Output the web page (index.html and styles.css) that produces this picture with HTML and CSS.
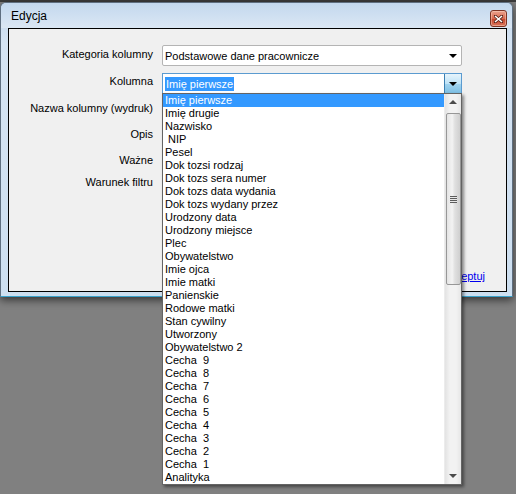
FILE: index.html
```html
<!DOCTYPE html>
<html lang="pl">
<head>
<meta charset="utf-8">
<title>Edycja</title>
<link rel="stylesheet" href="styles.css">
</head>
<body>
<div class="window">
  <div class="titlebar">
    <span class="title">Edycja</span>
    <span class="close"><svg width="9" height="8" viewBox="0 0 9 8"><path d="M1 1 L8 7 M8 1 L1 7" stroke="#5a2318" stroke-width="3" stroke-linecap="square"/><path d="M1 1 L8 7 M8 1 L1 7" stroke="#fff" stroke-width="1.6"/></svg></span>
  </div>
  <div class="client">
    <div class="row r1">
      <label class="lbl">Kategoria kolumny</label>
      <div class="combo">
        <span class="combo-text">Podstawowe dane pracownicze</span>
        <span class="arrow"></span>
      </div>
    </div>
    <div class="row r2">
      <label class="lbl">Kolumna</label>
      <div class="combo focus">
        <span class="combo-text"><span class="sel">Imię pierwsze</span></span>
        <span class="dbtn"><span class="arrow"></span></span>
      </div>
    </div>
    <div class="row r3"><label class="lbl">Nazwa kolumny (wydruk)</label></div>
    <div class="row r4"><label class="lbl">Opis</label></div>
    <div class="row r5"><label class="lbl">Ważne</label></div>
    <div class="row r6"><label class="lbl">Warunek filtru</label></div>
    <div class="footer"><a class="link" href="#">Akceptuj</a></div>
  </div>
</div>

<div class="droplist">
  <ul class="items">
    <li class="hl">Imię pierwsze</li>
    <li>Imię drugie</li>
    <li>Nazwisko</li>
    <li>&nbsp;NIP</li>
    <li>Pesel</li>
    <li>Dok tozsi rodzaj</li>
    <li>Dok tozs sera numer</li>
    <li>Dok tozs data wydania</li>
    <li>Dok tozs wydany przez</li>
    <li>Urodzony data</li>
    <li>Urodzony miejsce</li>
    <li>Plec</li>
    <li>Obywatelstwo</li>
    <li>Imie ojca</li>
    <li>Imie matki</li>
    <li>Panienskie</li>
    <li>Rodowe matki</li>
    <li>Stan cywilny</li>
    <li>Utworzony</li>
    <li>Obywatelstwo 2</li>
    <li>Cecha&nbsp; 9</li>
    <li>Cecha&nbsp; 8</li>
    <li>Cecha&nbsp; 7</li>
    <li>Cecha&nbsp; 6</li>
    <li>Cecha&nbsp; 5</li>
    <li>Cecha&nbsp; 4</li>
    <li>Cecha&nbsp; 3</li>
    <li>Cecha&nbsp; 2</li>
    <li>Cecha&nbsp; 1</li>
    <li>Analityka</li>
  </ul>
  <div class="vscroll">
    <span class="sarrow up"></span>
    <div class="track">
      <div class="thumb"><span class="grip"></span></div>
    </div>
    <span class="sarrow down"></span>
  </div>
</div>
</body>
</html>
```

FILE: styles.css
```css
* { box-sizing: border-box; }

html, body {
  margin: 0;
  padding: 0;
}

body {
  width: 516px;
  height: 494px;
  overflow: hidden;
  position: relative;
  background: linear-gradient(#3c3c3c 0, #3c3c3c 2px, #808080 2px);
  font-family: "Liberation Sans", Arial, sans-serif;
  font-size: 11px;
  color: #000;
}

.window {
  position: absolute;
  left: 0;
  top: 2px;
  width: 513px;
  height: 295px;
  border: 1px solid #5f6f80;
  border-bottom-color: #3aa3cc;
  border-radius: 6px 6px 0 0;
  background: linear-gradient(#c0d5eb, #d6e4f3 40px, #cddff0);
  box-shadow: 0 3px 9px rgba(0, 0, 0, 0.6);
  display: flex;
  flex-direction: column;
}

.titlebar {
  height: 25px;
  flex: none;
  display: flex;
  align-items: center;
  justify-content: space-between;
  padding: 0 5px 0 10px;
  background: linear-gradient(#c3d8ee, #dbe7f4);
  border-radius: 5px 5px 0 0;
}

.title {
  font-family: "Liberation Sans", Arial, sans-serif;
  font-size: 12px;
  color: #000;
  padding-top: 1px;
}

.close {
  width: 17px;
  height: 17px;
  margin-top: 6px;
  border: 1px solid #7d3324;
  border-radius: 3px;
  background: linear-gradient(#eba38f, #d9694f 50%, #c4432a 51%, #d9745a);
  display: flex;
  align-items: center;
  justify-content: center;
  box-shadow: inset 0 0 0 1px rgba(255, 220, 200, 0.45);
}

.client {
  flex: 1;
  margin: 0 5px 4px 7px;
  border: 1px solid #000;
  background: #f0f0f0;
  padding: 16px 0 8px 0;
  display: flex;
  flex-direction: column;
}

.row {
  display: flex;
  align-items: flex-start;
  gap: 9px;
}

.r1 { height: 27px; }
.r2 { height: 27px; }
.r3 { height: 26px; }
.r4 { height: 26px; }
.r5 { height: 22px; }
.r6 { height: 20px; }

.lbl {
  width: 144px;
  flex: none;
  text-align: right;
  line-height: 19px;
  white-space: nowrap;
}

.combo {
  width: 300px;
  height: 21px;
  border: 1px solid #b4b4b4;
  border-radius: 2px;
  background: #fff;
  display: flex;
  align-items: center;
  justify-content: space-between;
  position: relative;
}

.r2 .combo { margin-top: 1px; }

.combo.focus {
  border-color: #5b9bd0;
  border-radius: 0;
}

.combo-text {
  padding-left: 2px;
  line-height: 14px;
  white-space: nowrap;
}

.sel {
  background: #3399ff;
  color: #fff;
  padding: 1px 1px;
}

.arrow {
  width: 0;
  height: 0;
  border-left: 4px solid transparent;
  border-right: 4px solid transparent;
  border-top: 4px solid #000;
  margin-right: 3px;
}

.r1 .arrow { margin-right: 4px; }

.dbtn {
  width: 17px;
  height: 19px;
  border-left: 1px solid #3c7fb1;
  background: linear-gradient(#e6f4fc, #bfe3f7 50%, #a2d4ef 51%, #7dbfe4);
  display: flex;
  align-items: center;
  justify-content: center;
}

.dbtn .arrow { margin: 0; }

.footer {
  margin-top: auto;
  display: flex;
  justify-content: flex-end;
  padding-right: 21px;
}

.link {
  color: #0000ee;
  text-decoration: underline;
  line-height: 14px;
}

/* dropdown list overlay */
.droplist {
  position: absolute;
  left: 162px;
  top: 93px;
  width: 300px;
  height: 392px;
  border: 1px solid #646464;
  background: #fff;
  display: flex;
  box-shadow: 2px 2px 3px rgba(0, 0, 0, 0.45);
  z-index: 5;
}

.items {
  list-style: none;
  margin: 0;
  padding: 0;
  flex: 1;
}

.items li {
  height: 13px;
  line-height: 13px;
  padding-left: 2px;
  white-space: nowrap;
  color: #000;
}

.items li.hl {
  background: #3399ff;
  color: #fff;
}

.vscroll {
  width: 17px;
  flex: none;
  background: linear-gradient(90deg, #e3e3e3, #f2f2f2 30%, #f2f2f2 70%, #e6e6e6);
  border-left: 1px solid #ececec;
  display: flex;
  flex-direction: column;
  align-items: center;
}

.sarrow {
  width: 0;
  height: 0;
  border-left: 4px solid transparent;
  border-right: 4px solid transparent;
  flex: none;
}

.sarrow.up {
  border-bottom: 4px solid #4a4a4a;
  margin-top: 6px;
  margin-bottom: 9px;
}

.sarrow.down {
  border-top: 4px solid #4a4a4a;
  margin-bottom: 6px;
}

.track {
  flex: 1;
  width: 100%;
  display: flex;
  justify-content: center;
}

.thumb {
  width: 15px;
  height: 172px;
  border: 1px solid #979797;
  border-radius: 2px;
  background: linear-gradient(90deg, #e4e4e4, #f3f3f3 40%, #e0e0e0 60%, #cfcfcf);
  display: flex;
  align-items: center;
  justify-content: center;
}

.grip {
  width: 7px;
  height: 7px;
  background: repeating-linear-gradient(#5c5c5c 0 1px, #e8e8e8 1px 2px);
}
```
